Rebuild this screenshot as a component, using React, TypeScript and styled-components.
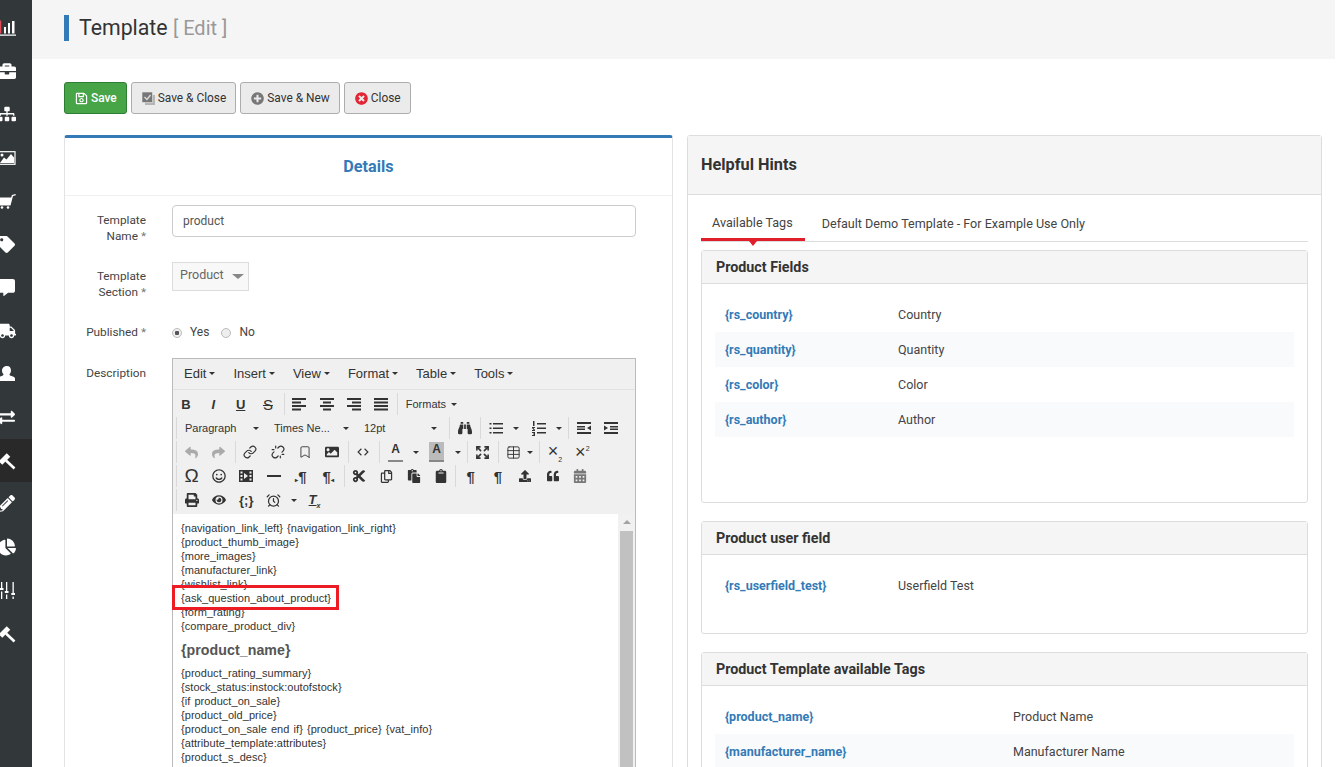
import React from 'react';
import styled, { createGlobalStyle } from 'styled-components';
import {
  FaBriefcase, FaSitemap, FaTag, FaCommentAlt, FaTruck,
  FaExchangeAlt, FaPencilAlt, FaChartPie, FaRegSave, FaPlusCircle, FaTimesCircle,
  FaBinoculars, FaImage, FaReply, FaShare, FaRegSmile,
  FaCut, FaRegCopy, FaPaste, FaClipboard, FaQuoteLeft, FaPrint, FaEye, FaCalendarAlt, FaUpload,
} from 'react-icons/fa';
import { AlarmClock, Bookmark, Expand, Link, Table, Unlink } from 'lucide-react';

const GlobalStyle = createGlobalStyle`
  html, body {
    margin: 0;
    height: 767px;
    overflow: hidden;
    background: #fff;
    font-family: Roboto, "Liberation Sans", sans-serif;
    font-size: 12px;
    color: #333;
  }
`;

/* tinymce glyphs that have no match in the packages */
const Lines = ({ d }: { d: string }) => (
  <svg width="16" height="16" viewBox="0 0 16 16" fill="#333"><path d={d} /></svg>
);

const ALIGN_LEFT = 'M1 2h14v2H1zM1 5.5h9v2H1zM1 9h14v2H1zM1 12.500h9v2H1z';
const ALIGN_CENTER = 'M1 2h14v2H1zM4 5.500h8v2H4zM1 9h14v2H1zM4 12.500h8v2H4z';
const ALIGN_RIGHT = 'M1 2h14v2H1zM6 5.500h9v2H6zM1 9h14v2H1zM6 12.500h9v2H6z';
const ALIGN_JUSTIFY = 'M1 2h14v2H1zM1 5.500h14v2H1zM1 9h14v2H1zM1 12.500h14v2H1z';
const BULLIST = 'M5 3h10v1.500H5zM5 7.500h10V9H5zM5 12h10v1.500H5zM1.500 3h2v1.500h-2zM1.500 7.500h2V9h-2zM1.500 12h2v1.500h-2z';
const NUMLIST = 'M6 3h9v1.500H6zM6 7.500h9V9H6zM6 12h9v1.500H6zM2 1h1.500v5H2zM1 7h3v1H2.500L4 10v1H1v-1h1.700L1 8zM1 12h3v4H1v-1h2v-.5H2v-1h1V13H1z';
const OUTDENT = 'M1 2h14v2H1zM1 12h14v2H1zM1 6h8v1.500H1zM1 8.500h8V10H1zM15 5.500v5L11 8z';
const INDENT = 'M1 2h14v2H1zM1 12h14v2H1zM7 6h8v1.500H7zM7 8.500h8V10H7zM1 5.500v5L5 8z';
const HR = 'M1 7h14v2H1z';
const MEDIA = 'M1 2h14v12H1zM2.500 3.500v2h2v-2zM2.500 7v2h2V7zM2.500 10.500v2h2v-2zM11.500 3.500v2h2v-2zM11.500 7v2h2V7zM11.500 10.500v2h2v-2zM6 5v6l4-3z';
const CODE = 'M6 4.300 6.800 5.200 4 8l2.800 2.800L6 11.700 2.300 8zM10 4.300 9.200 5.200 12 8l-2.800 2.800.8.900L13.700 8z';

const ChartIcon = () => (
  <svg width="18" height="18" viewBox="0 0 18 18" fill="#fff">
    <path d="M1 15.500h17v1.300H1zM6 8h2v6.500H6zM10 4h2v10.500h-2zM14 2h2.500v12.500H14z" />
    <path d="M1 1.500h2.200v13H1z" fill="#e04a55" />
  </svg>
);

const ImageIcon = () => (
  <svg width="18" height="18" viewBox="0 0 18 18">
    <rect x="1" y="2.700" width="16" height="12.600" fill="#32373a" stroke="#fff" strokeWidth="1.200" />
    <path d="M2 14 6 8.500l2.500 2L13 5l3 3.500V14z" fill="#fff" />
    <circle cx="4" cy="6" r="1.500" fill="#fff" />
  </svg>
);

const CartIcon = () => (
  <svg width="18" height="18" viewBox="0 0 18 18" fill="#fff">
    <path d="M0 5.500h13.300l-1.700 7H2L0 7zM17.500 2l.3 1.200-2.800.8-2.500 9.500H2v-1h9.200l2.700-9.500z" />
    <circle cx="4" cy="15.500" r="1.300" />
    <circle cx="10" cy="15.500" r="1.300" />
  </svg>
);

const UserIcon = () => (
  <svg width="18" height="18" viewBox="0 0 18 18" fill="#fff">
    <path d="M9 1c2.700 0 4 2 4 4.300 0 1.800-.7 3.200-1.500 4 0 1 .6 1.300 2 1.800 2 .7 3.500 1.400 3.500 2.400V16H0v-2.500c0-1 1.500-1.700 3.500-2.400 1.400-.5 2-.8 2-1.800-.8-.8-1.500-2.200-1.500-4C4 3 6.300 1 9 1z" />
  </svg>
);

const HammerIcon = () => (
  <svg width="18" height="18" viewBox="0 0 18 18" fill="none" stroke="#fff">
    <path d="M2.500 11 10.500 3" strokeWidth="5" />
    <path d="M8 8.500l8.500 8" strokeWidth="2.600" />
  </svg>
);

const SlidersIcon = () => (
  <svg width="18" height="18" viewBox="0 0 18 18" fill="#fff">
    <path d="M3 0h1.300v6h1.200v2H1.800V6H3zM3 9.500h1.300V17H3zM8 0h1.300v9h1.200v2H6.800V9H8zM8 12.500h1.300V17H8zM14.500 0h1.300v11H17v2h-3.700v-2h1.200zM14.500 14.500h1.300V17h-1.300z" />
  </svg>
);

const StackedCheckIcon = () => (
  <svg width="13" height="13" viewBox="0 0 13 13">
    <path d="M3 3h10v10H3z" fill="#b5b5b5" />
    <path d="M0 0h10.500v10.500H0z" fill="#777" stroke="#ebebeb" strokeWidth=".6" />
    <path d="M2.500 5 5 7.500 8.500 3" fill="none" stroke="#ddd" strokeWidth="1.300" />
  </svg>
);

const SIDE_ICONS = [
  <ChartIcon />, <FaBriefcase size={18} />, <FaSitemap size={18} />, <ImageIcon />, <CartIcon />,
  <FaTag size={17} />, <FaCommentAlt size={17} />, <FaTruck size={18} />, <UserIcon />,
  <FaExchangeAlt size={17} />, <HammerIcon />, <FaPencilAlt size={17} />, <FaChartPie size={18} />,
  <SlidersIcon />, <HammerIcon />,
];

const MENUS = ['Edit', 'Insert', 'View', 'Format', 'Table', 'Tools'];

const CONTENT_TOP = [
  '{navigation_link_left} {navigation_link_right}',
  '{product_thumb_image}',
  '{more_images}',
  '{manufacturer_link}',
  '{wishlist_link}',
  '{ask_question_about_product}',
  '{form_rating}',
  '{compare_product_div}',
];

const CONTENT_BOTTOM = [
  '{product_rating_summary}',
  '{stock_status:instock:outofstock}',
  '{if product_on_sale}',
  '{product_old_price}',
  '{product_on_sale end if} {product_price} {vat_info}',
  '{attribute_template:attributes}',
  '{product_s_desc}',
  '{form_addtocart:add_to_cart1}',
];

const PRODUCT_FIELDS = [
  ['{rs_country}', 'Country'],
  ['{rs_quantity}', 'Quantity'],
  ['{rs_color}', 'Color'],
  ['{rs_author}', 'Author'],
];

const PRODUCT_TAGS = [
  ['{product_name}', 'Product Name'],
  ['{manufacturer_name}', 'Manufacturer Name'],
];

const Toolbar = () => (
  <ToolbarArea>
    <ToolRow>
      <ToolGroup $first>
        <ToolButton><Glyph $bold>B</Glyph></ToolButton>
        <ToolButton><Glyph $bold $italic>I</Glyph></ToolButton>
        <ToolButton><Glyph $bold $under>U</Glyph></ToolButton>
        <ToolButton><Glyph $strike $para>S</Glyph></ToolButton>
      </ToolGroup>
      <ToolGroup>
        <ToolButton><Lines d={ALIGN_LEFT} /></ToolButton>
        <ToolButton><Lines d={ALIGN_CENTER} /></ToolButton>
        <ToolButton><Lines d={ALIGN_RIGHT} /></ToolButton>
        <ToolButton><Lines d={ALIGN_JUSTIFY} /></ToolButton>
      </ToolGroup>
      <ToolGroup>
        <ListBox $width={66}>Formats<Caret /></ListBox>
      </ToolGroup>
    </ToolRow>
    <ToolRow>
      <ToolGroup $trail={4}>
        <ListBox $width={89}>Paragraph<Caret /></ListBox>
        <ListBox $width={90}>Times Ne...<Caret /></ListBox>
        <ListBox $width={88}>12pt<Caret /></ListBox>
      </ToolGroup>
      <ToolGroup>
        <ToolButton><FaBinoculars size={14} /></ToolButton>
      </ToolGroup>
      <ToolGroup $trail={0}>
        <SplitTool $width={43} $left={6} $right={6}><Lines d={BULLIST} /><Caret /></SplitTool>
        <SplitTool $width={43} $left={6} $right={6}><Lines d={NUMLIST} /><Caret /></SplitTool>
      </ToolGroup>
      <ToolGroup>
        <ToolButton><Lines d={OUTDENT} /></ToolButton>
        <ToolButton><Lines d={INDENT} /></ToolButton>
      </ToolGroup>
    </ToolRow>
    <ToolRow>
      <ToolGroup>
        <ToolButton><MutedIcon><FaReply size={13} /></MutedIcon></ToolButton>
        <ToolButton><MutedIcon><FaShare size={13} /></MutedIcon></ToolButton>
      </ToolGroup>
      <ToolGroup>
        <ToolButton><Link size={14} strokeWidth={2} /></ToolButton>
        <ToolButton><Unlink size={14} strokeWidth={2} /></ToolButton>
        <ToolButton><Bookmark size={14} strokeWidth={1.5} /></ToolButton>
        <ToolButton><FaImage size={14} /></ToolButton>
      </ToolGroup>
      <ToolGroup>
        <ToolButton><Lines d={CODE} /></ToolButton>
      </ToolGroup>
      <ToolGroup $trail={4}>
        <SplitTool $width={41} $left={7} $right={3}><ColorLetter>A</ColorLetter><Caret /></SplitTool>
        <SplitTool $width={41} $left={7} $right={2}><ColorLetter $filled>A</ColorLetter><Caret /></SplitTool>
      </ToolGroup>
      <ToolGroup>
        <ToolButton><Expand size={15} strokeWidth={2.5} /></ToolButton>
      </ToolGroup>
      <ToolGroup $trail={3}>
        <SplitTool $width={36} $left={6} $right={3}><Table size={15} strokeWidth={1.5} /><Caret /></SplitTool>
      </ToolGroup>
      <ToolGroup>
        <ToolButton><Glyph $thin>×<SubMark>2</SubMark></Glyph></ToolButton>
        <ToolButton><Glyph $thin>×<SupMark>2</SupMark></Glyph></ToolButton>
      </ToolGroup>
    </ToolRow>
    <ToolRow>
      <ToolGroup>
        <ToolButton><Glyph $large>Ω</Glyph></ToolButton>
        <ToolButton><FaRegSmile size={14} /></ToolButton>
        <ToolButton><Lines d={MEDIA} /></ToolButton>
        <ToolButton><Lines d={HR} /></ToolButton>
        <ToolButton><Glyph $bold $para><Mini>▸</Mini>¶</Glyph></ToolButton>
        <ToolButton><Glyph $bold $para>¶<Mini>◂</Mini></Glyph></ToolButton>
      </ToolGroup>
      <ToolGroup $trail={0}>
        <ToolButton><FaCut size={14} /></ToolButton>
        <ToolButton><FaRegCopy size={13} /></ToolButton>
        <ToolButton><FaPaste size={14} /></ToolButton>
        <ToolButton><FaClipboard size={14} /></ToolButton>
      </ToolGroup>
      <ToolGroup>
        <ToolButton><Glyph $bold $para>¶</Glyph></ToolButton>
        <ToolButton><Glyph $bold $para>¶</Glyph></ToolButton>
        <ToolButton><FaUpload size={12} /></ToolButton>
        <ToolButton><FaQuoteLeft size={12} /></ToolButton>
        <ToolButton><FaCalendarAlt size={14} color="#777" /></ToolButton>
      </ToolGroup>
    </ToolRow>
    <ToolRow>
      <ToolGroup>
        <ToolButton><FaPrint size={14} /></ToolButton>
        <ToolButton><FaEye size={14} /></ToolButton>
        <ToolButton><Glyph $bold>{'{;}'}</Glyph></ToolButton>
        <SplitTool $width={41} $left={6} $right={4}><AlarmClock size={15} strokeWidth={2} /><Caret /></SplitTool>
        <ToolButton><Glyph $bold $italic $under>T<SubMark>x</SubMark></Glyph></ToolButton>
      </ToolGroup>
    </ToolRow>
  </ToolbarArea>
);

const App = () => {
  return (
    <Page>
      <GlobalStyle />
      <Sidebar>
        {SIDE_ICONS.map((icon, i) => (
          <SideItem key={i} $active={i === 10}>{icon}</SideItem>
        ))}
      </Sidebar>
      <Main>
        <PageHeader>
          <PageTitle>Template <TitleNote>[ Edit ]</TitleNote></PageTitle>
        </PageHeader>
        <Content>
          <ButtonBar>
            <ActionButton $primary><FaRegSave size={13} />Save</ActionButton>
            <ActionButton><StackedCheckIcon />Save &amp; Close</ActionButton>
            <ActionButton><FaPlusCircle size={13} color="#777" />Save &amp; New</ActionButton>
            <ActionButton><FaTimesCircle size={13} color="#e32636" />Close</ActionButton>
          </ButtonBar>
          <Columns>
            <DetailsPanel>
              <DetailsTitle>Details</DetailsTitle>
              <FormBody>
                <FormRow $gap={18}>
                  <FormLabel>Template Name <Req>*</Req></FormLabel>
                  <TextInput>product</TextInput>
                </FormRow>
                <FormRow $gap={17}>
                  <FormLabel $pad={6}>Template Section <Req>*</Req></FormLabel>
                  <SelectBox>Product<SelectCaret /></SelectBox>
                </FormRow>
                <FormRow $gap={11}>
                  <FormLabel>Published <Req>*</Req></FormLabel>
                  <RadioGroup>
                    <Radio $checked />Yes
                    <Radio />No
                  </RadioGroup>
                </FormRow>
                <FormRow $gap={0}>
                  <FormLabel>Description</FormLabel>
                  <Editor>
                    <MenuBar>
                      {MENUS.map(m => <MenuItem key={m}>{m}<Caret /></MenuItem>)}
                    </MenuBar>
                    <Toolbar />
                    <EditArea>
                      <EditText>
                        <Marker />
                        {CONTENT_TOP.map(l => <div key={l}>{l}</div>)}
                        <EditHeading>{'{product_name}'}</EditHeading>
                        {CONTENT_BOTTOM.map(l => <div key={l}>{l}</div>)}
                      </EditText>
                      <ScrollBar><ScrollArrow /><ScrollThumb /></ScrollBar>
                    </EditArea>
                  </Editor>
                </FormRow>
              </FormBody>
            </DetailsPanel>
            <HintsPanel>
              <HintsHead>Helpful Hints</HintsHead>
              <HintsBody>
                <Tabs>
                  <TabItem $active>Available Tags</TabItem>
                  <TabItem>Default Demo Template - For Example Use Only</TabItem>
                </Tabs>
                <TagCard $height={253}>
                  <TagHead>Product Fields</TagHead>
                  <TagRows>
                    {PRODUCT_FIELDS.map(([tag, name]) => (
                      <TagRow key={tag} $col={173}><TagName>{tag}</TagName><span>{name}</span></TagRow>
                    ))}
                  </TagRows>
                </TagCard>
                <TagCard $height={113}>
                  <TagHead>Product user field</TagHead>
                  <TagRows>
                    <PlainRow $col={173}><TagName>{'{rs_userfield_test}'}</TagName><span>Userfield Test</span></PlainRow>
                  </TagRows>
                </TagCard>
                <TagCard>
                  <TagHead>Product Template available Tags</TagHead>
                  <TagRows>
                    {PRODUCT_TAGS.map(([tag, name]) => (
                      <TagRow key={tag} $col={288}><TagName>{tag}</TagName><span>{name}</span></TagRow>
                    ))}
                  </TagRows>
                </TagCard>
              </HintsBody>
            </HintsPanel>
          </Columns>
        </Content>
      </Main>
    </Page>
  );
};

const Page = styled.div`
  display: flex;
  width: 1335px;
  height: 767px;
  overflow: hidden;
`;

const Sidebar = styled.nav`
  flex: 0 0 32px;
  background: #32373a;
  padding-top: 6px;
  overflow: hidden;
`;

const SideItem = styled.div<{ $active?: boolean }>`
  display: flex;
  align-items: center;
  width: 32px;
  height: 43.3px;
  color: #fff;
  background: ${props => (props.$active ? '#292929' : 'transparent')};
  svg {
    margin-left: -2px;
  }
`;

const Main = styled.main`
  flex: 1;
  min-width: 0;
`;

const PageHeader = styled.header`
  display: flex;
  align-items: center;
  box-sizing: border-box;
  height: 59px;
  padding: 0 0 4px 32px;
  background: #f5f5f5;
`;

const PageTitle = styled.h1`
  margin: 0;
  padding-left: 10px;
  border-left: 5px solid #337ab7;
  font-size: 21.3px;
  font-weight: 400;
  line-height: 26px;
  color: #333;
`;

const TitleNote = styled.span`
  color: #999;
  font-size: 20px;
`;

const Content = styled.div`
  padding: 23px 13px 0 32px;
`;

const ButtonBar = styled.div`
  display: flex;
  gap: 4px;
  margin-bottom: 21px;
`;

const ActionButton = styled.button<{ $primary?: boolean }>`
  display: flex;
  align-items: center;
  gap: 3px;
  height: 32px;
  padding: 0 9px 0 10px;
  border: 1px solid ${props => (props.$primary ? '#2d7d32' : '#adadad')};
  border-radius: 3px;
  background: ${props => (props.$primary ? '#47a447' : '#ebebeb')};
  color: ${props => (props.$primary ? '#fff' : '#333')};
  font-family: inherit;
  font-size: 11.9px;
  font-weight: ${props => (props.$primary ? 500 : 400)};
`;

const Columns = styled.div`
  display: flex;
  gap: 14px;
  align-items: flex-start;
`;

const DetailsPanel = styled.section`
  flex: 0 0 609px;
  box-sizing: border-box;
  border: 1px solid #e3e3e3;
  border-top: 3px solid #337ab7;
  border-radius: 3px 3px 0 0;
`;

const DetailsTitle = styled.h2`
  margin: 0;
  height: 57px;
  line-height: 58px;
  border-bottom: 1px solid #f0f0f0;
  text-align: center;
  font-size: 16.2px;
  font-weight: 700;
  color: #337ab7;
`;

const FormBody = styled.div`
  padding: 9px 36px 0 20px;
`;

const FormRow = styled.div<{ $gap: number }>`
  display: flex;
  align-items: flex-start;
  gap: 26px;
  margin-bottom: ${props => props.$gap}px;
`;

const FormLabel = styled.label<{ $pad?: number }>`
  flex: 0 0 61px;
  padding-top: ${props => props.$pad ?? 7}px;
  text-align: right;
  font-size: 11.8px;
  line-height: 16px;
  color: #444;
`;

const Req = styled.span`
  color: #777;
`;

const TextInput = styled.div`
  flex: 1;
  box-sizing: border-box;
  height: 32px;
  padding: 0 10px;
  line-height: 30px;
  border: 1px solid #ccc;
  border-radius: 4px;
  color: #555;
`;

const SelectBox = styled.div`
  display: flex;
  align-items: center;
  gap: 8px;
  height: 29px;
  box-sizing: border-box;
  padding: 0 4px 4px 7px;
  border: 1px solid #ddd;
  background: #f8f8f8;
  color: #666;
  font-size: 12.500px;
`;

const SelectCaret = styled.i`
  width: 0;
  height: 0;
  margin-top: 4px;
  border-left: 6px solid transparent;
  border-right: 6px solid transparent;
  border-top: 5px solid #888;
`;

const RadioGroup = styled.div`
  display: flex;
  align-items: center;
  height: 30px;
  color: #444;
`;

const Radio = styled.i<{ $checked?: boolean }>`
  display: block;
  box-sizing: border-box;
  width: 10px;
  height: 10px;
  margin: 1px 8px 0 0;
  border-radius: 50%;
  border: 1px solid #bbb;
  background: ${props => (props.$checked ? 'radial-gradient(circle, #555 0 2px, #eee 2.5px)' : '#eee')};
  &:nth-of-type(2) {
    margin-left: 12px;
  }
`;

const Editor = styled.div`
  flex: 1;
  min-width: 0;
  box-sizing: border-box;
  border: 1px solid #bbb;
  background: #f0f0f0;
`;

const MenuBar = styled.div`
  display: flex;
  box-sizing: border-box;
  height: 31px;
  align-items: center;
  padding: 0 0 2px 11px;
  gap: 18px;
  border-bottom: 1px solid #e2e2e2;
  font-family: "Liberation Sans", sans-serif;
  font-size: 13px;
  color: #333;
`;

const MenuItem = styled.span`
  display: flex;
  align-items: center;
  gap: 3px;
`;

const Caret = styled.i`
  flex: none;
  width: 0;
  height: 0;
  margin-top: 1px;
  border-left: 3.500px solid transparent;
  border-right: 3.500px solid transparent;
  border-top: 3.500px solid #333;
`;

const ToolbarArea = styled.div`
  padding: 2px 0 2px 3px;
`;

const ToolRow = styled.div`
  display: flex;
  height: 24px;
`;

const ToolGroup = styled.div<{ $first?: boolean; $trail?: number }>`
  display: flex;
  flex: none;
  align-items: center;
  height: 22px;
  margin-top: 1px;
  margin-left: ${props => (props.$first ? -5.6 : 0)}px;
  border-left: 1px solid ${props => (props.$first ? 'transparent' : '#d9d9d9')};
  padding: 0 ${props => props.$trail ?? 2}px 0 1px;
`;

const ToolButton = styled.span`
  display: flex;
  align-items: center;
  justify-content: center;
  flex: none;
  width: 27.300px;
  height: 22px;
  color: #333;
`;

const SplitTool = styled.span<{ $width: number; $left: number; $right: number }>`
  display: flex;
  align-items: center;
  justify-content: space-between;
  flex: none;
  box-sizing: border-box;
  width: ${props => props.$width}px;
  padding: 0 ${props => props.$right}px 0 ${props => props.$left}px;
  height: 22px;
  color: #333;
`;

const MutedIcon = styled.span`
  display: flex;
  color: #aaa;
`;

const ListBox = styled.span<{ $width: number }>`
  display: flex;
  align-items: center;
  justify-content: space-between;
  box-sizing: border-box;
  width: ${props => props.$width}px;
  padding: 0 8px 0 7px;
  font-family: "Liberation Sans", sans-serif;
  font-size: 11px;
  color: #333;
`;

const Glyph = styled.span<{ $bold?: boolean; $italic?: boolean; $under?: boolean; $strike?: boolean; $thin?: boolean; $large?: boolean; $para?: boolean }>`
  font-family: "Liberation Sans", sans-serif;
  font-size: ${props => (props.$large ? 19 : props.$thin ? 18 : props.$para ? 15 : 13)}px;
  font-weight: ${props => (props.$bold ? 700 : 400)};
  font-style: ${props => (props.$italic ? 'italic' : 'normal')};
  text-decoration: ${props => (props.$under ? 'underline' : props.$strike ? 'line-through' : 'none')};
  color: #333;
`;

const SubMark = styled.sub`
  font-size: 7px;
`;

const SupMark = styled.sup`
  font-size: 7px;
`;

const Mini = styled.span`
  font-size: 6px;
`;

const ColorLetter = styled.span<{ $filled?: boolean }>`
  display: block;
  flex: none;
  width: 15px;
  height: 18px;
  line-height: 15px;
  text-align: center;
  font-family: "Liberation Sans", sans-serif;
  font-size: 12px;
  font-weight: 700;
  border-bottom: 2px solid #888;
  background: ${props => (props.$filled ? '#bbb' : 'transparent')};
`;

const EditArea = styled.div`
  display: flex;
  height: 400px;
  background: #fff;
`;

const EditText = styled.div`
  position: relative;
  flex: 1;
  padding: 7px 8px;
  font-family: "Liberation Sans", sans-serif;
  font-size: 11px;
  letter-spacing: 0.05px;
  word-spacing: 1px;
  line-height: 14px;
  color: #333;
`;

const Marker = styled.div`
  position: absolute;
  left: -1px;
  top: 71px;
  width: 167px;
  height: 25px;
  box-sizing: border-box;
  border: 3px solid #ed1c24;
`;

const EditHeading = styled.div`
  margin: 9px 0 8px;
  font-size: 14.200px;
  line-height: 16px;
  font-weight: 700;
  color: #555;
`;

const ScrollBar = styled.div`
  flex: 0 0 17px;
  background: #f1f1f1;
`;

const ScrollArrow = styled.div`
  width: 0;
  height: 0;
  margin: 6px auto 7px;
  border-left: 4px solid transparent;
  border-right: 4px solid transparent;
  border-bottom: 4px solid #a3a3a3;
`;

const ScrollThumb = styled.div`
  width: 13px;
  height: 360px;
  margin: 0 auto;
  background: #c1c1c1;
`;

const HintsPanel = styled.section`
  flex: 0 0 635px;
  box-sizing: border-box;
  border: 1px solid #ddd;
  border-radius: 3px 3px 0 0;
`;

const HintsHead = styled.h2`
  margin: 0;
  height: 58px;
  line-height: 57px;
  padding-left: 13px;
  background: #f5f5f5;
  border-bottom: 1px solid #ddd;
  font-size: 16.300px;
  font-weight: 700;
  color: #333;
`;

const HintsBody = styled.div`
  padding: 12px 13px 0;
`;

const Tabs = styled.div`
  display: flex;
  height: 34px;
  margin-bottom: 8px;
  border-bottom: 1px solid #ddd;
  font-size: 12.600px;
`;

const TabItem = styled.div<{ $active?: boolean }>`
  position: relative;
  padding: 0 ${props => (props.$active ? '12px 0 11px' : '17px 0 17px')};
  height: 34px;
  line-height: ${props => (props.$active ? 32 : 34)}px;
  box-sizing: border-box;
  color: #444;
  border-bottom: ${props => (props.$active ? '3px solid #e01f2b' : 'none')};
  &::after {
    content: ${props => (props.$active ? '""' : 'none')};
    position: absolute;
    left: 50%;
    bottom: -8px;
    margin-left: -4px;
    border-left: 4px solid transparent;
    border-right: 4px solid transparent;
    border-top: 5px solid #e01f2b;
  }
`;

const TagCard = styled.div<{ $height?: number }>`
  box-sizing: border-box;
  height: ${props => (props.$height ? `${props.$height}px` : 'auto')};
  margin-bottom: 18px;
  border: 1px solid #ddd;
  border-radius: 3px;
`;

const TagHead = styled.div`
  height: 32px;
  line-height: 33px;
  padding-left: 14px;
  background: #f5f5f5;
  border-bottom: 1px solid #ddd;
  font-size: 14.300px;
  font-weight: 700;
  color: #333;
`;

const TagRows = styled.div`
  padding: 13px 13px 0;
`;

const PlainRow = styled.div<{ $col: number }>`
  display: grid;
  grid-template-columns: ${props => props.$col}px 1fr;
  align-items: center;
  height: 35px;
  padding-left: 10px;
  font-size: 12.500px;
  color: #444;
`;

const TagRow = styled(PlainRow)`
  &:nth-child(even) {
    background: #f9fafc;
  }
`;

const TagName = styled.span`
  font-weight: 700;
  color: #337ab7;
`;

export default App;
